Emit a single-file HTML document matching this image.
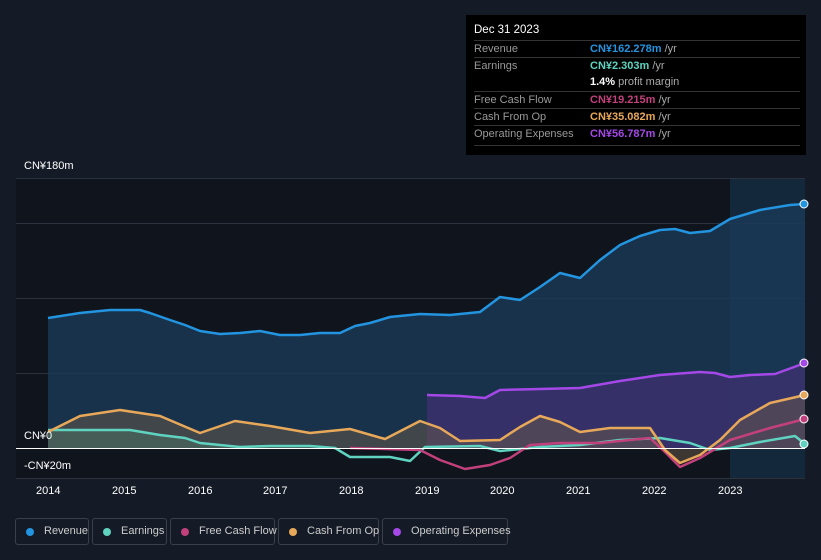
<!DOCTYPE html><html><head><style>
html,body{margin:0;width:821px;height:560px;overflow:hidden}
body{background:#151b26;font-family:"Liberation Sans",sans-serif;position:relative}
.tt{position:absolute;left:466px;top:15px;width:340px;height:140px;background:#000;color:#fff;font-size:11px}
.tt .h{position:absolute;left:8px;top:9px;font-size:11.5px}
.row{position:absolute;left:8px;width:326px;border-top:1px solid #333;height:17px;line-height:17px}
.row .l{color:#999;position:absolute;left:0}
.row .v{position:absolute;left:116px;font-weight:bold;white-space:nowrap}
.row .v span{color:#aaa;font-weight:normal}
.lg{position:absolute;top:518px;height:27px;border:1px solid #3a3f4a;border-radius:3px;color:#ccc;font-size:11px;line-height:25px;box-sizing:border-box;white-space:nowrap}
.lg i{position:absolute;left:10px;top:9px;width:8px;height:8px;border-radius:50%}
.lg b{font-weight:normal;position:absolute;left:28px}
.ax{position:absolute;color:#fff;font-size:11px}
</style></head><body>
<svg width="821" height="560" style="position:absolute;left:0;top:0">
<rect x="16" y="178" width="714" height="300" fill="#10141c"/>
<rect x="730" y="178" width="75" height="300" fill="#13283a"/>
<g stroke="#2c323d" stroke-width="1"><line x1="16" y1="178.5" x2="805" y2="178.5"/><line x1="16" y1="223.5" x2="805" y2="223.5"/><line x1="16" y1="298.5" x2="805" y2="298.5"/><line x1="16" y1="373.5" x2="805" y2="373.5"/><line x1="16" y1="478.5" x2="805" y2="478.5"/></g>
<path d="M48,318 L80,313 L110,310 L140,310 L150,313 L170,320 L185,325 L200,331 L220,334 L240,333 L260,331 L280,335 L300,335 L320,333 L340,333 L355,326 L370,323 L390,317 L420,314 L450,315 L480,312 L500,297 L520,300 L540,287 L560,273 L580,278 L600,260 L620,245 L640,236 L660,230 L675,229 L690,233 L710,231 L730,219 L760,210 L790,205 L805,204 L805,448 L48,448Z" fill="#1a3a58" fill-opacity="0.8"/>
<path d="M427,395 L460,396 L485,398 L500,390 L540,389 L580,388 L620,381 L660,375 L700,372 L715,373 L730,377 L750,375 L775,374 L805,363 L805,448 L427,448Z" fill="#4a2f7a" fill-opacity="0.6"/>
<path d="M48,432 L80,416 L120,410 L160,416 L200,433 L235,421 L270,426 L310,433 L350,429 L385,439 L420,421 L440,428 L460,441 L500,440 L520,427 L540,416 L560,422 L580,432 L610,428 L650,428 L665,450 L680,463 L700,455 L720,440 L740,420 L770,403 L805,395 L805,448 L48,448Z" fill="#6a5a4a" fill-opacity="0.5"/>
<path d="M48,430 L130,430 L160,435 L185,438 L200,443 L240,447 L335,448 L48,448Z" fill="#4a6a60" fill-opacity="0.6"/>
<g fill="none" stroke-width="2.5" stroke-linejoin="round">
<path d="M48,430 L130,430 L160,435 L185,438 L200,443 L240,447 L270,446 L310,446 L335,448 L350,457 L390,457 L410,461 L425,447 L480,446 L500,451 L540,447 L580,445 L620,440 L660,438 L690,443 L710,450 L730,448 L760,442 L795,436 L805,444" stroke="#5fd3c0"/>
<path d="M350,448 L420,450 L440,460 L465,469 L490,465 L510,458 L530,445 L560,443 L600,443 L650,438 L665,452 L680,467 L700,458 L730,440 L770,428 L805,419" stroke="#c2407c"/>
<path d="M48,432 L80,416 L120,410 L160,416 L200,433 L235,421 L270,426 L310,433 L350,429 L385,439 L420,421 L440,428 L460,441 L500,440 L520,427 L540,416 L560,422 L580,432 L610,428 L650,428 L665,450 L680,463 L700,455 L720,440 L740,420 L770,403 L805,395" stroke="#e8a85a"/>
<path d="M427,395 L460,396 L485,398 L500,390 L540,389 L580,388 L620,381 L660,375 L700,372 L715,373 L730,377 L750,375 L775,374 L805,363" stroke="#a548e8"/>
<path d="M48,318 L80,313 L110,310 L140,310 L150,313 L170,320 L185,325 L200,331 L220,334 L240,333 L260,331 L280,335 L300,335 L320,333 L340,333 L355,326 L370,323 L390,317 L420,314 L450,315 L480,312 L500,297 L520,300 L540,287 L560,273 L580,278 L600,260 L620,245 L640,236 L660,230 L675,229 L690,233 L710,231 L730,219 L760,210 L790,205 L805,204" stroke="#2394e0"/>
</g>
<line x1="16" y1="448.5" x2="805" y2="448.5" stroke="#fff" stroke-width="1"/>
<g stroke="#fff" stroke-width="1"><circle cx="804" cy="204" r="4" fill="#2394e0"/><circle cx="804" cy="363" r="4" fill="#a548e8"/><circle cx="804" cy="395" r="4" fill="#e8a85a"/><circle cx="804" cy="419" r="4" fill="#c2407c"/><circle cx="804" cy="444" r="4" fill="#5fd3c0"/></g>
</svg>
<div class="ax" style="left:24px;top:160px">CN¥180m</div>
<div class="ax" style="left:24px;top:430px">CN¥0</div>
<div class="ax" style="left:24px;top:460px">-CN¥20m</div>
<div class="ax" style="left:36px;top:485px">2014</div>
<div class="ax" style="left:112px;top:485px">2015</div>
<div class="ax" style="left:188px;top:485px">2016</div>
<div class="ax" style="left:263px;top:485px">2017</div>
<div class="ax" style="left:339px;top:485px">2018</div>
<div class="ax" style="left:415px;top:485px">2019</div>
<div class="ax" style="left:490px;top:485px">2020</div>
<div class="ax" style="left:566px;top:485px">2021</div>
<div class="ax" style="left:642px;top:485px">2022</div>
<div class="ax" style="left:718px;top:485px">2023</div>
<div class="tt"><div class="h">Dec 31 2023</div>
<div class="row" style="top:25px"><span class="l">Revenue</span><span class="v" style="color:#2394e0">CN¥162.278m <span>/yr</span></span></div>
<div class="row" style="top:42px"><span class="l">Earnings</span><span class="v" style="color:#5fd3c0">CN¥2.303m <span>/yr</span></span></div>
<div class="row" style="top:59px;border-top:none"><span class="v" style="color:#fff">1.4% <span>profit margin</span></span></div>
<div class="row" style="top:76px"><span class="l">Free Cash Flow</span><span class="v" style="color:#c2407c">CN¥19.215m <span>/yr</span></span></div>
<div class="row" style="top:93px"><span class="l">Cash From Op</span><span class="v" style="color:#e8a85a">CN¥35.082m <span>/yr</span></span></div>
<div class="row" style="top:110px"><span class="l">Operating Expenses</span><span class="v" style="color:#a548e8">CN¥56.787m <span>/yr</span></span></div>
<div class="row" style="top:130px;height:0"></div>
</div>
<div class="lg" style="left:15px;width:74px"><i style="background:#2394e0"></i><b>Revenue</b></div>
<div class="lg" style="left:92px;width:75px"><i style="background:#5fd3c0"></i><b>Earnings</b></div>
<div class="lg" style="left:170px;width:105px"><i style="background:#c2407c"></i><b>Free Cash Flow</b></div>
<div class="lg" style="left:278px;width:101px"><i style="background:#e8a85a"></i><b>Cash From Op</b></div>
<div class="lg" style="left:382px;width:126px"><i style="background:#a548e8"></i><b>Operating Expenses</b></div>
</body></html>
